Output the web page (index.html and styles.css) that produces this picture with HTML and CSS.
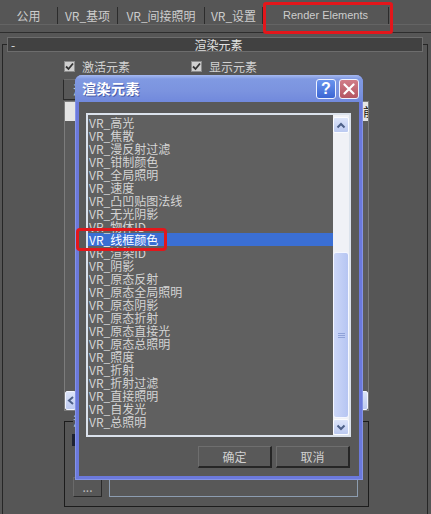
FILE: index.html
```html
<!DOCTYPE html>
<html lang="zh">

<head>
	<meta charset="utf-8">
	<title>渲染设置</title>
	<link rel="stylesheet" href="styles.css">
</head>

<body>

	<div class="window">
		<div class="tabs">
			<div class="tab tab-1">公用</div>
			<div class="tab tab-2">VR_基项</div>
			<div class="tab tab-3">VR_间接照明</div>
			<div class="tab tab-4">VR_设置</div>
			<div class="tab tab-5">Render Elements</div>
		</div>

		<div class="panel">
			<fieldset class="rollout">
				<legend class="rollout-head"><span class="rollout-toggle">-</span>渲染元素</legend>

				<div class="checks">
					<label class="check check-1"><span class="box"><svg width="9" height="9" viewBox="0 0 9 9"><path d="M1 4.5 L3.5 7 L8 1.5" fill="none" stroke="#333" stroke-width="1.8"/></svg></span>激活元素</label>
					<label class="check"><span class="box"><svg width="9" height="9" viewBox="0 0 9 9"><path d="M1 4.5 L3.5 7 L8 1.5" fill="none" stroke="#333" stroke-width="1.8"/></svg></span>显示元素</label>
				</div>

				<div class="add-row">
					<button class="btn-add">添加...</button>
				</div>

				<div class="elements">
					<div class="elements-head">
						<span class="head-name">名称</span>
						<span class="head-last">前</span>
					</div>
					<div class="elements-rows"></div>
					<div class="hscroll">
						<span class="hs-btn"><svg width="8" height="9" viewBox="0 0 8 9"><path d="M6 1 L2 4.5 L6 8" fill="none" stroke="#4d6088" stroke-width="2"/></svg></span>
						<span class="hs-track"></span>
						<span class="hs-btn hs-right"></span>
					</div>
				</div>

				<fieldset class="group">
					<legend class="group-label">渲染元素输出</legend>
					<div class="swatch"></div>
					<div class="path-row">
						<button class="btn-browse">...</button>
						<div class="path-field"></div>
					</div>
				</fieldset>
			</fieldset>
		</div>
	</div>

	<div class="dialog">
		<div class="dialog-title">
			<span class="dialog-caption">渲染元素</span>
			<span class="title-btn title-help">?</span>
			<span class="title-btn title-close"><svg width="12" height="12" viewBox="0 0 12 12"><path d="M1.5 1.5 L10.5 10.5 M10.5 1.5 L1.5 10.5" stroke="#fff" stroke-width="2.2" stroke-linecap="round"/></svg></span>
		</div>
		<div class="dialog-body">
			<div class="picker">
				<ul class="picker-items">
					<li>VR_高光</li>
					<li>VR_焦散</li>
					<li>VR_漫反射过滤</li>
					<li>VR_钳制颜色</li>
					<li>VR_全局照明</li>
					<li>VR_速度</li>
					<li>VR_凸凹贴图法线</li>
					<li>VR_无光阴影</li>
					<li>VR_物体ID</li>
					<li class="selected">VR_线框颜色</li>
					<li>VR_渲染ID</li>
					<li>VR_阴影</li>
					<li>VR_原态反射</li>
					<li>VR_原态全局照明</li>
					<li>VR_原态阴影</li>
					<li>VR_原态折射</li>
					<li>VR_原态直接光</li>
					<li>VR_原态总照明</li>
					<li>VR_照度</li>
					<li>VR_折射</li>
					<li>VR_折射过滤</li>
					<li>VR_直接照明</li>
					<li>VR_自发光</li>
					<li>VR_总照明</li>
				</ul>
				<div class="vscroll">
					<div class="sb-btn"><svg width="10" height="7" viewBox="0 0 10 7"><path d="M1.5 5.5 L5 2 L8.5 5.5" fill="none" stroke="#4d6088" stroke-width="2"/></svg></div>
					<div class="sb-track">
						<div class="sb-thumb"><span class="grip"></span></div>
					</div>
					<div class="sb-btn"><svg width="10" height="7" viewBox="0 0 10 7"><path d="M1.5 1.5 L5 5 L8.5 1.5" fill="none" stroke="#4d6088" stroke-width="2"/></svg></div>
				</div>
			</div>
			<div class="dialog-actions">
				<button class="btn">确定</button>
				<button class="btn">取消</button>
			</div>
		</div>
	</div>

	<div class="mark mark-tab"></div>
	<div class="mark mark-item"></div>

</body>

</html>
```

FILE: styles.css
```css
* { box-sizing: border-box; }
body {
	margin: 0;
	background: #565656;
	color: #d2d2d2;
	font-family: "Noto Sans CJK SC", "Noto Sans", sans-serif;
	font-size: 12px;
	line-height: 13px;
}
button { font: inherit; color: inherit; margin: 0; }

.window { width: 431px; height: 514px; overflow: hidden; }

/* tab strip */
.tabs { display: flex; height: 25px; padding-top: 7px; border-bottom: 1px solid #646464; }
.tab { height: 17px; line-height: 17px; text-align: center; border-right: 1px solid #2c2c2c; white-space: nowrap; color: #cdcdcd; }
.tab-1 { width: 58px; }
.tab-2 { width: 60px; }
.tab-3 { width: 87px; }
.tab-4 { width: 58px; }
.tab-5 { width: 126px; font-family: "Liberation Sans", sans-serif; font-size: 11px; }

.panel { margin-top: 7px; border-top: 1px solid #2e2e2e; padding-top: 4px; }

/* rollout */
.rollout {
	margin: 0 3px 0 2px;
	padding: 0 4px 0 4px;
	border: 1px solid #262626;
	border-bottom: none;
	height: 480px;
	min-width: 0;
}
.rollout-head {
	width: 416px;
	height: 15px;
	padding: 0;
	line-height: 13px;
	text-align: center;
	color: #e2e2e2;
	background: #414141;
	border: 1px solid #6d6d6d;
}
.rollout-toggle { float: left; margin-left: 3px; }

.checks { display: flex; margin: 8px 0 0 57px; height: 13px; }
.check { display: flex; align-items: center; gap: 7px; }
.check-1 { width: 127px; }
.box {
	width: 11px; height: 11px;
	background: #cfcfcf;
	border: 1px solid #8c8c8c;
	display: flex; align-items: center; justify-content: center;
}

.add-row { margin: 6px 0 0 56px; }
.btn-add {
	height: 21px; width: 80px;
	padding: 0 0 0 9px;
	text-align: left;
	background: #585858;
	border: 1px solid #2a2a2a;
	border-top-color: #6c6c6c;
}

/* element list behind the picker */
.elements {
	margin: 1px 0 0 57px;
	width: 305px;
	height: 310px;
	border: 1px solid #7c7c7c;
	background: #5c5c5c;
	display: flex;
	flex-direction: column;
}
.elements-head {
	display: flex;
	height: 19px;
	background: #e4e4e4;
	color: #111;
	line-height: 19px;
}
.head-name { padding-left: 16px; }
.head-last { margin-left: auto; width: 5px; overflow: hidden; }
.elements-rows { flex: 1; }
.hscroll { display: flex; height: 19px; }
.hs-btn {
	width: 11px;
	background: linear-gradient(#dbe3f8, #bdcaf0);
	border: 1px solid #f2f5ff;
	border-radius: 2px;
	display: flex; align-items: center; justify-content: center;
}
.hs-track { flex: 1; background: #eef0f5; }
.hs-right { width: 17px; }

/* output group */
.group {
	margin: 5px 0 0 57px;
	width: 305px;
	height: 91px;
	padding: 0 8px;
	border: 1px solid #1c1c1c;
	min-width: 0;
}
.group-label { padding: 0; line-height: 10px; }
.swatch { width: 40px; height: 12px; margin: 8px 0 0 -1px; background: #1e2232; }
.path-row { display: flex; gap: 7px; margin-top: 31px; }
.btn-browse {
	width: 29px; height: 20px;
	padding: 0;
	background: #575757;
	border: 1px solid #2a2a2a;
	border-top-color: #6a6a6a;
	border-left-color: #6a6a6a;
	color: #bdbdbd;
	line-height: 14px;
}
.path-field { width: 249px; height: 19px; margin-top: 1px; border: 1px solid #8d9db0; background: #585858; }

/* element picker dialog (modal, floats over the panel) */
.dialog {
	position: absolute;
	left: 75px; top: 75px;
	width: 288px; height: 405px;
	background: #6b79dc;
	border-radius: 7px 7px 0 0;
	display: flex;
	flex-direction: column;
	box-shadow: inset 0 0 0 1px #8594e6;
}
.dialog-title {
	height: 27px;
	flex: none;
	display: flex;
	align-items: center;
	padding: 0 4px 0 7px;
	border-radius: 7px 7px 0 0;
	background: linear-gradient(#a6b9f0 0, #8099e2 4px, #7b93df 60%, #7189dc);
}
.dialog-caption {
	flex: 1;
	color: #fff;
	font-size: 14px;
	font-weight: bold;
	text-shadow: 1px 1px 0 #4a5ca8;
	letter-spacing: 0.5px;
}
.title-btn {
	width: 20px; height: 20px;
	border: 1px solid #eef2ff;
	border-radius: 3px;
	display: flex; align-items: center; justify-content: center;
	color: #fff;
	font-family: "Liberation Sans", sans-serif;
	font-weight: bold;
	font-size: 16px;
}
.title-help { background: linear-gradient(#6a94ee, #3c66d4); margin-right: 3px; }
.title-close { background: linear-gradient(#d17d88, #b45562); }

.dialog-body {
	flex: 1;
	margin: 0 4px 4px;
	background: #595959;
	padding: 11px 8px 0 7px;
}
.picker {
	height: 324px;
	border: 2px solid #dbe2ec;
	background: #606060;
	display: flex;
}
.picker-items { list-style: none; margin: 0; padding: 1px 0 0; flex: 1; }
.picker-items li { height: 13px; padding-left: 1px; white-space: nowrap; color: #d4d4d4; }
.picker-items li.selected { background: #3b6fd4; color: #fff; }

.vscroll { width: 16px; padding-top: 2px; display: flex; flex-direction: column; background: #f0f1f6; }
.sb-btn {
	height: 16px;
	flex: none;
	background: linear-gradient(#dde5fa, #bccaf1);
	border: 1px solid #fbfcff;
	border-radius: 2px;
	display: flex; align-items: center; justify-content: center;
}
.sb-track { flex: 1; padding-top: 119px; }
.sb-thumb {
	height: 166px;
	background: linear-gradient(to right, #ccd7f8, #b6c5f2);
	border: 1px solid #f5f7ff;
	border-radius: 3px;
	display: flex; align-items: center; justify-content: center;
}
.grip { width: 7px; height: 5px; border-top: 1px solid #8fa2d8; border-bottom: 1px solid #8fa2d8; position: relative; }
.grip::after { content: ""; position: absolute; left: 0; right: 0; top: 1px; border-top: 1px solid #8fa2d8; }

.dialog-actions { display: flex; justify-content: flex-end; gap: 4px; margin-top: 9px; padding-right: 1px; }
.btn {
	width: 74px; height: 22px;
	padding: 0;
	background: #595959;
	border: 1px solid #6e6e6e;
	border-right: 2px solid #262626;
	border-bottom: 2px solid #262626;
	color: #d0d0d0;
}

/* red call-out frames */
.mark { position: absolute; border: 3px solid #e3161b; border-radius: 3px; }
.mark-tab { left: 263px; top: 2px; width: 130px; height: 32px; }
.mark-item { left: 76px; top: 228px; width: 91px; height: 23px; border-radius: 4px; }
```
